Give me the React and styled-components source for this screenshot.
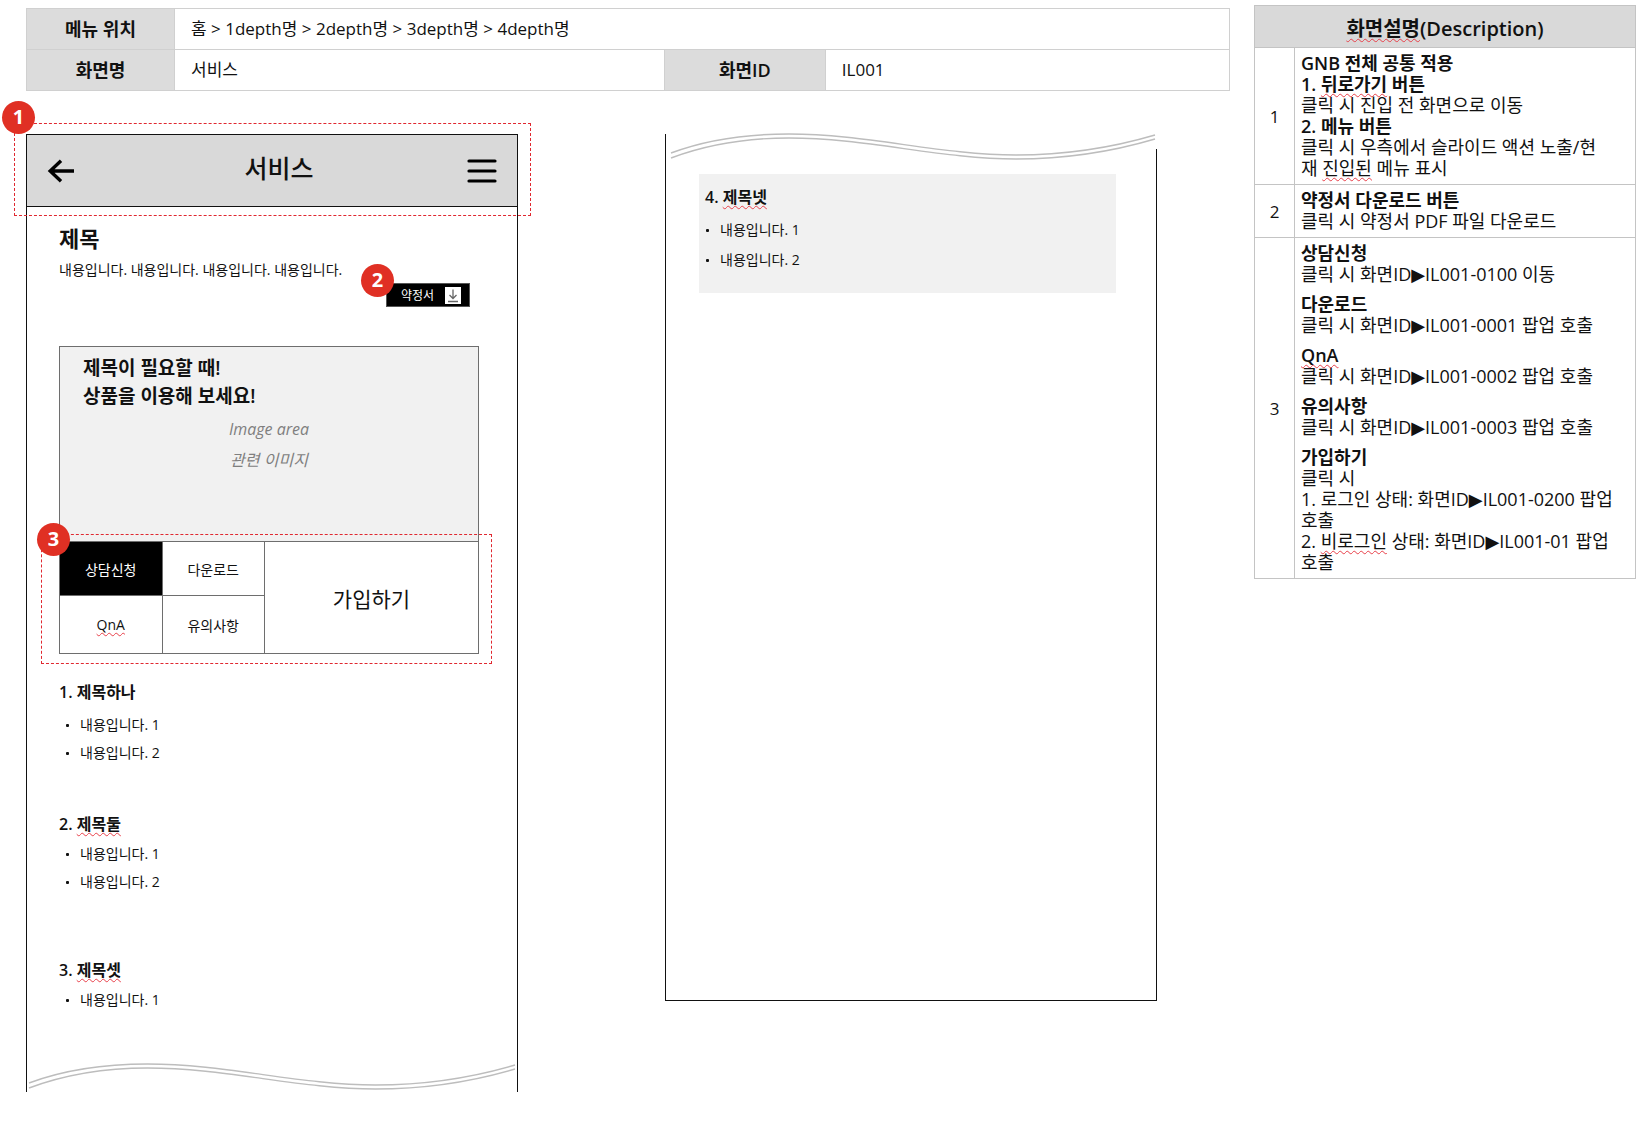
import React from "react";
import styled, { createGlobalStyle } from "styled-components";

const GlobalStyle = createGlobalStyle`
  *, *::before, *::after { box-sizing: border-box; }
  body {
    margin: 0;
    background: #fff;
    color: #111;
    font-family: "Open Sans", "Noto Sans CJK KR", sans-serif;
  }
  h1, h2, h3, p, ul { margin: 0; padding: 0; font-weight: inherit; }
  button { font: inherit; color: inherit; margin: 0; padding: 0; cursor: pointer; }
`;

const Page = styled.div`
  display: flex;
  align-items: flex-start;
  gap: 24px;
  padding: 5px 15px 32px 26px;
`;

const Main = styled.main`
  flex: 1;
  min-width: 0;
  padding-top: 3px;
`;

const InfoTable = styled.table`
  width: 100%;
  table-layout: fixed;
  border-collapse: collapse;

  th, td {
    height: 41px;
    padding: 0 16px;
    border: 1px solid #d0d0d0;
    line-height: 24px;
  }
  th {
    background: #dcdcdc;
    font-size: 18px;
    font-weight: 600;
    text-align: center;
  }
  td {
    font-size: 17px;
    text-align: left;
  }
`;

const Col = styled.col`
  width: ${(p) => p.$w};
`;

const Screens = styled.div`
  display: flex;
  align-items: flex-start;
  gap: 147px;
  margin-top: 43px;
`;

const Screen = styled.section`
  flex: 0 1 492px;
  min-width: 0;
`;

const EDGE = "1px solid #111";

const AppBar = styled.header`
  position: relative;
  display: flex;
  align-items: center;
  justify-content: space-between;
  height: 73px;
  padding: 0 20px;
  border: ${EDGE};
  background: #d9d9d9;
`;

const AppTitle = styled.h1`
  font-size: 25px;
  font-weight: 500;
  line-height: 32px;
  padding: 0 0 6px 16px;
`;

const IconButton = styled.button`
  display: flex;
  border: 0;
  background: none;
`;

const Callout = styled.div`
  position: absolute;
  inset: ${(p) => p.$inset};
  border: 1px dashed #e02830;
  pointer-events: none;
`;

const Badge = styled.span`
  position: absolute;
  top: ${(p) => p.$top};
  left: ${(p) => p.$left};
  width: 33px;
  height: 33px;
  border-radius: 50%;
  background: #e03024;
  color: #fff;
  font-size: 20px;
  font-weight: 700;
  line-height: 32px;
  text-align: center;
`;

const Body = styled.div`
  padding: 17px 38px 0 32px;
  border-left: ${EDGE};
  border-right: ${EDGE};
`;

const PageTitle = styled.h2`
  font-size: 22px;
  font-weight: 600;
  line-height: 28px;
`;

const Lead = styled.p`
  margin-top: 7px;
  font-size: 14px;
  line-height: 22px;
`;

const DownloadRow = styled.div`
  display: flex;
  justify-content: flex-end;
  margin-top: 2px;
  padding-right: 9px;
`;

const DownloadButton = styled.button`
  position: relative;
  display: flex;
  align-items: center;
  justify-content: flex-end;
  gap: 11px;
  width: 84px;
  height: 24px;
  && { padding: 0 8px; }
  border: 1px solid #555;
  background: #000;
  && { color: #fff; font-size: 12px; }
`;

const Card = styled.div`
  position: relative;
  margin-top: 39px;
  border: 1px solid #6e6e6e;
`;

const Banner = styled.div`
  height: 194px;
  padding: 7px 23px;
  background: #f1f1f1;
`;

const BannerTitle = styled.h3`
  font-size: 19px;
  font-weight: 600;
  line-height: 28px;
`;

const ImageNote = styled.p`
  margin-top: 4px;
  color: #7f7f7f;
  font-size: 16px;
  font-style: italic;
  line-height: 31px;
  text-align: center;
`;

const Actions = styled.div`
  display: grid;
  grid-template-columns: 102fr 102fr 214fr;
  grid-template-rows: 53px 57px;
  gap: 1px;
  border-top: 1px solid #6e6e6e;
  background: #6e6e6e;
`;

const ActionButton = styled.button`
  border: 0;
  background: ${(p) => (p.$dark ? "#000" : "#fff")};
  && {
    color: ${(p) => (p.$dark ? "#fff" : "#111")};
    font-size: ${(p) => (p.$big ? "21px" : "14px")};
  }
  ${(p) => p.$big && "grid-column: 3; grid-row: 1 / span 2;"}
`;

const Section = styled.section`
  margin-top: ${(p) => p.$top || 0}px;
`;

const SectionTitle = styled.h3`
  font-size: 16px;
  font-weight: 600;
  line-height: 24px;
`;

const Bullets = styled.ul`
  display: flex;
  flex-direction: column;
  gap: ${(p) => (p.$flush ? 2 : 0)}px;
  margin-top: ${(p) => (p.$loose ? 7 : 4)}px;
  padding-left: ${(p) => (p.$flush ? 1 : 7)}px;
  list-style: none;
`;

const Bullet = styled.li`
  display: flex;
  align-items: center;
  gap: 11px;
  font-size: 14px;
  line-height: 28px;

  &::before {
    content: "";
    width: 3px;
    height: 3px;
    border-radius: 1px;
    background: #111;
  }
`;

const Typo = styled.span`
  text-decoration: underline wavy #e8404a 1px;
  text-decoration-skip-ink: none;
  text-underline-offset: 2px;
`;

const TearBottom = styled.div`
  height: 78px;
  padding: 50px 2px 0;
  border-left: ${EDGE};
  border-right: ${EDGE};
`;

const TearTop = styled.div`
  height: 15px;
  padding: 0 2px 0 5px;
  border-left: ${EDGE};
`;

const WaveSvg = styled.svg`
  display: block;
  width: 100%;
  height: 28px;
  overflow: visible;
`;

const RestBody = styled.div`
  min-height: 852px;
  padding: 25px 40px 0 33px;
  border: ${EDGE};
  border-top: 0;
`;

const Notice = styled.div`
  padding: 11px 6px 19px;
  background: #f1f1f1;
`;

const DescTable = styled.table`
  flex: 0 0 382px;
  width: 382px;
  table-layout: fixed;
  border-collapse: collapse;
  font-size: 18px;
  line-height: 21px;

  th, td { border: 1px solid #c4c4c4; }
  thead th {
    height: 42px;
    padding: 3px 0 0;
    background: #d9d9d9;
    font-size: 20px;
    font-weight: 600;
    text-align: center;
  }
  tbody th {
    padding: 0;
    font-weight: 400;
    font-size: 17px;
    text-align: center;
  }
  td {
    padding: 5px 0 5px 6px;
    white-space: nowrap;
    vertical-align: middle;
  }
`;

const Entry = styled.div`
  & + & { margin-top: 9px; }
`;

const Strong = styled.p`
  font-weight: 600;
`;

const ArrowGlyph = styled.span`
  font-family: "DejaVu Sans", sans-serif;
  line-height: 1;
`;

const Wave = () => (
  <WaveSvg viewBox="0 0 484 28" preserveAspectRatio="none" fill="none" stroke="#bdbdbd" strokeWidth="1.4" aria-hidden="true">
    <path d="M0 19 C40 4 80 0 118 0 C195 0 270 21 345 21 C395 21 440 14 484 1" />
    <path d="M0 24 C40 9 80 4 118 4 C195 4 270 25 345 25 C395 25 440 18 484 5" />
  </WaveSvg>
);

const BackIcon = () => (
  <svg width="28" height="24" viewBox="0 0 28 24" fill="none" stroke="#000" strokeWidth="3.4">
    <path d="M27 12H3M14 1.8L3.2 12L14 22.2" />
  </svg>
);

const MenuIcon = () => (
  <svg width="30" height="26" viewBox="0 0 30 26" stroke="#000" strokeWidth="3.2" strokeLinecap="round">
    <path d="M2 3H28M2 13H28M2 23H28" />
  </svg>
);

const SaveIcon = () => (
  <svg width="16" height="17" viewBox="0 0 16 17" fill="none">
    <rect width="16" height="17" fill="#fff" />
    <path d="M8 2.5V11.5M4.5 8L8 11.5L11.5 8" stroke="#666" strokeWidth="1.3" />
    <path d="M3 14.5H13" stroke="#666" strokeWidth="1.5" />
  </svg>
);

const ScreenLink = ({ id, before = "클릭 시 ", after }) => (
  <p>
    {before}화면ID<ArrowGlyph>▶</ArrowGlyph>{id} {after}
  </p>
);

const sections = [
  { n: 1, title: "제목하나", items: 2, top: 26, loose: true },
  { n: 2, title: "제목둘", typo: true, items: 2, top: 45 },
  { n: 3, title: "제목셋", typo: true, items: 1, top: 62 },
];

const ContentSection = ({ n, title, typo, items, top, loose, flush }) => (
  <Section $top={top}>
    <SectionTitle>
      {n}. {typo ? <Typo>{title}</Typo> : title}
    </SectionTitle>
    <Bullets $loose={loose} $flush={flush}>
      {Array.from({ length: items }, (_, i) => (
        <Bullet key={i}>내용입니다. {i + 1}</Bullet>
      ))}
    </Bullets>
  </Section>
);

export default function App() {
  return (
    <>
      <GlobalStyle />
      <Page>
        <Main>
          <InfoTable>
            <colgroup>
              <Col $w="148px" />
              <Col />
              <Col $w="161px" />
              <Col $w="33.6%" />
            </colgroup>
            <tbody>
              <tr>
                <th scope="row">메뉴 위치</th>
                <td colSpan={3}>홈 &gt; 1depth명 &gt; 2depth명 &gt; 3depth명 &gt; 4depth명</td>
              </tr>
              <tr>
                <th scope="row">화면명</th>
                <td>서비스</td>
                <th scope="row">화면ID</th>
                <td>IL001</td>
              </tr>
            </tbody>
          </InfoTable>

          <Screens>
            <Screen>
              <AppBar>
                <IconButton aria-label="뒤로가기"><BackIcon /></IconButton>
                <AppTitle>서비스</AppTitle>
                <IconButton aria-label="메뉴"><MenuIcon /></IconButton>
                <Callout $inset="-12px -14px -10px -13px" />
                <Badge $top="-34px" $left="-25px">1</Badge>
              </AppBar>
              <Body>
                <PageTitle>제목</PageTitle>
                <Lead>내용입니다. 내용입니다. 내용입니다. 내용입니다.</Lead>
                <DownloadRow>
                  <DownloadButton>
                    약정서 <SaveIcon />
                    <Badge $top="-20px" $left="-26px">2</Badge>
                  </DownloadButton>
                </DownloadRow>
                <Card>
                  <Banner>
                    <BannerTitle>제목이 필요할 때!<br />상품을 이용해 보세요!</BannerTitle>
                    <ImageNote>Image area<br />관련 이미지</ImageNote>
                  </Banner>
                  <Actions>
                    <ActionButton $dark>상담신청</ActionButton>
                    <ActionButton>다운로드</ActionButton>
                    <ActionButton><Typo>QnA</Typo></ActionButton>
                    <ActionButton>유의사항</ActionButton>
                    <ActionButton $big>가입하기</ActionButton>
                  </Actions>
                  <Callout $inset="187px -14px -11px -19px" />
                  <Badge $top="176px" $left="-23px">3</Badge>
                </Card>
                {sections.map((s) => (
                  <ContentSection key={s.n} {...s} />
                ))}
              </Body>
              <TearBottom><Wave /></TearBottom>
            </Screen>

            <Screen>
              <TearTop><Wave /></TearTop>
              <RestBody>
                <Notice>
                  <ContentSection n={4} title="제목넷" typo items={2} flush loose />
                </Notice>
              </RestBody>
            </Screen>
          </Screens>
        </Main>

        <DescTable>
          <colgroup>
            <Col $w="40px" />
            <Col />
          </colgroup>
          <thead>
            <tr>
              <th colSpan={2}><Typo>화면설명</Typo>(Description)</th>
            </tr>
          </thead>
          <tbody>
            <tr>
              <th scope="row">1</th>
              <td>
                <Strong>GNB 전체 공통 적용</Strong>
                <Strong>1. <Typo>뒤로가기</Typo> 버튼</Strong>
                <p>클릭 시 진입 전 화면으로 이동</p>
                <Strong>2. 메뉴 버튼</Strong>
                <p>클릭 시 우측에서 슬라이드 액션 노출/현<br />재 <Typo>진입된</Typo> 메뉴 표시</p>
              </td>
            </tr>
            <tr>
              <th scope="row">2</th>
              <td>
                <Strong>약정서 다운로드 버튼</Strong>
                <p>클릭 시 약정서 PDF 파일 다운로드</p>
              </td>
            </tr>
            <tr>
              <th scope="row">3</th>
              <td>
                <Entry>
                  <Strong>상담신청</Strong>
                  <ScreenLink id="IL001-0100" after="이동" />
                </Entry>
                <Entry>
                  <Strong>다운로드</Strong>
                  <ScreenLink id="IL001-0001" after="팝업 호출" />
                </Entry>
                <Entry>
                  <Strong><Typo>QnA</Typo></Strong>
                  <ScreenLink id="IL001-0002" after="팝업 호출" />
                </Entry>
                <Entry>
                  <Strong>유의사항</Strong>
                  <ScreenLink id="IL001-0003" after="팝업 호출" />
                </Entry>
                <Entry>
                  <Strong>가입하기</Strong>
                  <p>클릭 시</p>
                  <ScreenLink before="1. 로그인 상태: " id="IL001-0200" after={<>팝업<br />호출</>} />
                  <ScreenLink before={<>2. <Typo>비로그인</Typo> 상태: </>} id="IL001-01" after={<>팝업<br />호출</>} />
                </Entry>
              </td>
            </tr>
          </tbody>
        </DescTable>
      </Page>
    </>
  );
}
